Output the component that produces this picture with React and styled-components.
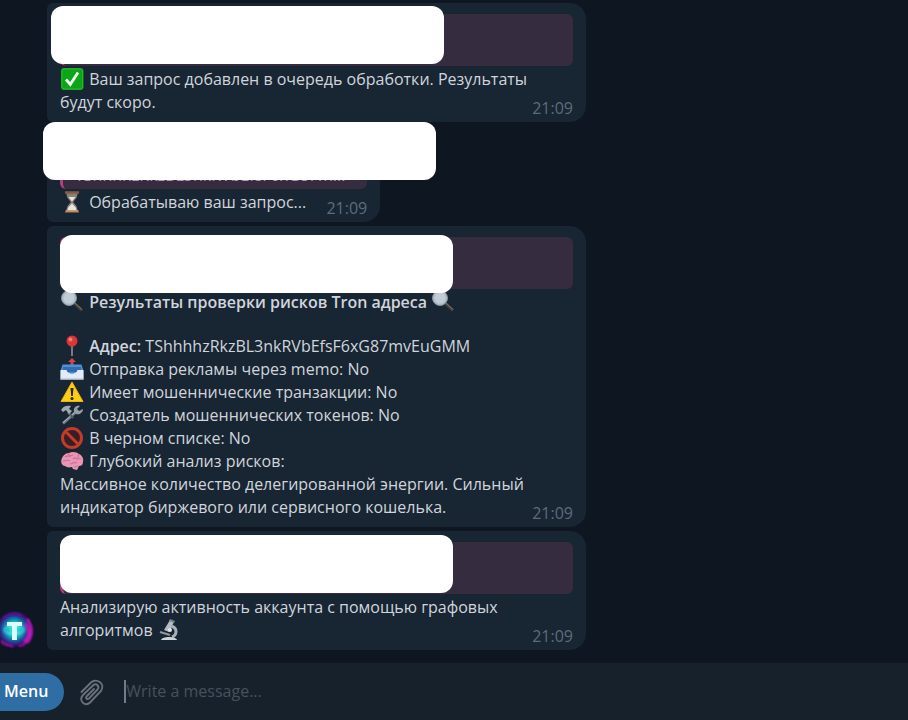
import React from "react"
import styled, { createGlobalStyle } from "styled-components"

const GlobalStyle = createGlobalStyle`
  * {
    box-sizing: border-box;
  }
  body {
    margin: 0;
    background: #0e1621;
    color: #d0d5db;
    font-family: "Open Sans", "Noto Sans", sans-serif;
    font-size: 16px;
    line-height: 23px;
    overflow-x: hidden;
  }
`

const Page = styled.div`
  min-height: 100vh;
  display: flex;
  flex-direction: column;
`

const Chat = styled.main`
  flex: 1;
  display: flex;
  align-items: flex-end;
  padding: 3px 16px 13px 0;
`

const AvatarSlot = styled.div`
  flex: none;
  width: 47px;
  display: flex;
`

const Messages = styled.div`
  flex: 1;
  display: flex;
  flex-direction: column;
  align-items: flex-start;
  gap: 4px;
`

const Bubble = styled.article`
  width: ${props => (props.$compact ? "auto" : "100%")};
  max-width: 539px;
  padding: 11px 13px 2px;
  background: #182533;
  border-radius: 6px 16px 16px 6px;
`

const Preview = styled.div`
  position: relative;
  height: 52px;
  margin-bottom: 2px;
  border-left: 3px solid #b83d7f;
  border-radius: 6px;
  background: #362c3f;
  color: #b993b4;
`

const PreviewText = styled.div`
  position: absolute;
  left: 12px;
  right: 8px;
  bottom: 2px;
  overflow: hidden;
  white-space: nowrap;
  text-overflow: ellipsis;
`

const Cover = styled.div`
  position: absolute;
  z-index: 1;
  left: ${props => props.$left}px;
  top: ${props => props.$top}px;
  width: 393px;
  height: 58px;
  border-radius: 12px;
  background: #fff;
`

const Text = styled.p`
  margin: 0;
  padding-right: ${props => (props.$inlineTime ? 61 : 0)}px;
`

const Title = styled.h2`
  margin: 0 0 21px;
  font-size: 16px;
  font-weight: 600;
`

const Facts = styled.ul`
  list-style: none;
  margin: 0;
  padding: 0;
`

const Label = styled.strong`
  font-weight: 600;
`

const Time = styled.time`
  display: block;
  margin-top: -17px;
  text-align: right;
  color: #5d6c7c;
`

const Emoji = styled.svg`
  width: 24px;
  height: 22px;
  margin-right: 1px;
  vertical-align: -5px;
`

const Avatar = styled.svg`
  width: 40px;
  height: 40px;
  margin-left: -5px;
`

const Composer = styled.form`
  display: flex;
  align-items: center;
  height: 57px;
  background: #17212b;
`

const MenuButton = styled.button`
  height: 38px;
  padding: 0 16px 0 4px;
  border: 0;
  border-radius: 0 19px 19px 0;
  background: #2f6ea5;
  color: #fff;
  font: inherit;
  font-weight: 600;
`

const AttachButton = styled.button`
  display: flex;
  margin: 0 18px 0 14px;
  padding: 0;
  border: 0;
  background: none;
  color: #69727c;
`

const Caret = styled.span`
  width: 2px;
  height: 23px;
  background: #727c87;
`

const MessageInput = styled.input`
  flex: 1;
  min-width: 0;
  padding: 0;
  border: 0;
  outline: 0;
  background: none;
  color: #d3d8de;
  font: inherit;
  &::placeholder {
    color: #46515d;
    opacity: 1;
  }
`

const Icon = ({ children }) => (
  <Emoji viewBox="0 0 24 22" aria-hidden="true">{children}</Emoji>
)

const Check = () => (
  <Icon>
    <rect x="1" y="0" width="22.500" height="22" rx="3" fill="#0ca518" />
    <rect x="2" y="1" width="20.500" height="20" rx="2" fill="none" stroke="#2cb636" />
    <path d="M6 11.500l4.300 5L18 4.500" fill="none" stroke="#f4fff4" strokeWidth="2.800" />
  </Icon>
)

const Hourglass = () => (
  <Icon>
    <path d="M6.500 2h11c0 5-2.500 6.500-4.300 9 1.800 2.500 4.300 4 4.300 9h-11c0-5 2.500-6.500 4.300-9-1.800-2.500-4.300-4-4.300-9z" fill="#83827d" />
    <path d="M8.500 6h7l-3.500 4.500zM12 12c1 3 4.500 3 4.500 8h-9c0-5 3.500-5 4.500-8z" fill="#eee4d2" />
    <path d="M5 1.500h14M5 20.500h14" stroke="#8a5b40" strokeWidth="2.400" />
    <path d="M6 20h12" stroke="#e1c4a6" />
  </Icon>
)

const Magnifier = () => (
  <Icon>
    <path d="M14 12l8 7.500" stroke="#44413f" strokeWidth="3" />
    <path d="M15 12l7 6.500" stroke="#837764" />
    <circle cx="9" cy="7" r="7.500" fill="#aebbc8" stroke="#8693a0" />
    <circle cx="9" cy="7" r="5.500" fill="#c1ccd6" />
  </Icon>
)

const Pin = () => (
  <Icon>
    <path d="M12 10v11" stroke="#8c9198" strokeWidth="1.600" />
    <circle cx="12" cy="6" r="5.500" fill="#dc3534" />
    <circle cx="10.500" cy="4.500" r="2" fill="#f27b73" />
  </Icon>
)

const Inbox = () => (
  <Icon>
    <path d="M12 0l4 4h-2.500v4h-3V4H8z" fill="#d74448" />
    <path d="M2.500 6.500h19L23.500 13v8.500H.500V13z" fill="#4c91d8" />
    <path d="M3 9h18v5H3z" fill="#2f6cb0" />
    <path d="M.500 12h6c1 5 10 5 11 0h6v9.500H.500z" fill="#e5ebf2" />
    <path d="M.500 21h23" stroke="#aab8c8" />
  </Icon>
)

const Warning = () => (
  <Icon>
    <path d="M12 1L23 20.500H1z" fill="#fdce13" stroke="#edb116" strokeLinejoin="round" />
    <path d="M10.500 7h3l-.700 8h-1.600z" fill="#2a2419" />
    <circle cx="12" cy="17.500" r="1.500" fill="#2a2419" />
  </Icon>
)

const Tools = () => (
  <Icon>
    <path d="M3 19.500L17 7" stroke="#717b84" strokeWidth="3" />
    <path d="M3 18.500L16.500 7" stroke="#b2bac1" />
    <path d="M8 8l5 6" stroke="#56616b" strokeWidth="2.600" />
    <path d="M1 6c2-4 6-5 10-4L9 5l3 2-3 3-3-4-3 2z" fill="#a1aab2" />
    <path d="M14 8c-1-4 2-7 6-6l-3 3 2 2 4-2c0 4-4 6-7 5z" fill="#939ea7" />
  </Icon>
)

const Forbidden = () => (
  <Icon>
    <circle cx="12" cy="11" r="9.500" fill="#391f25" stroke="#c43b27" strokeWidth="3" />
    <path d="M6 5l12 12" stroke="#c43b27" strokeWidth="3" />
  </Icon>
)

const Brain = () => (
  <Icon>
    <path d="M2 8c1-3 4-5 7-5 3-2 8-1 10 1 3 1 5 5 4 8 0 3-2 4-4 4l-2 4-4-1-1-2c-3 1-6 0-7-1-3 0-5-4-3-8z" fill="#e995b4" />
    <path d="M5 7c2-2 4 0 6-1M8 3c0 3 3 3 5 2M13 9c2-2 4-1 5 1M3 11c3 0 4-2 7 0M10 14c3 0 4-3 7-1M19 5c-2 1-1 4 2 4M14 17l4-1" fill="none" stroke="#cb6f98" strokeWidth="1.100" />
  </Icon>
)

const Microscope = () => (
  <Icon>
    <path d="M13 1l4 2-5 10-5-2z" fill="#b4bdc4" />
    <path d="M13 0l5 2-1 2-5-2z" fill="#7a858f" />
    <path d="M14 7c7 2 6 9 1 11" fill="none" stroke="#a5b0b8" strokeWidth="3" />
    <path d="M3 13l10 3" stroke="#8d99a3" strokeWidth="2" />
    <path d="M4 21c1-4 15-4 16 0z" fill="#ced4d8" />
    <circle cx="13" cy="11" r="2" fill="#e0e5e8" />
  </Icon>
)

const BotAvatar = () => (
  <Avatar viewBox="0 0 40 40" role="img" aria-label="Tron bot">
    <defs>
      <radialGradient id="glow" cx="48%" cy="48%">
        <stop offset="0" stopColor="#48f5ec" />
        <stop offset=".4" stopColor="#14b4c8" />
        <stop offset=".68" stopColor="#1f4594" />
        <stop offset=".84" stopColor="#3a1266" />
        <stop offset="1" stopColor="#160a2c" />
      </radialGradient>
      <filter id="soft">
        <feGaussianBlur stdDeviation=".8" />
      </filter>
    </defs>
    <circle cx="20" cy="20" r="19" fill="url(#glow)" />
    <g fill="none" filter="url(#soft)">
      <path d="M32 9c6 8 6 17 0 24M30 14c6 6 4 13-1 18" stroke="#c21fc0" strokeWidth="2.500" />
      <path d="M6 31c5 6 9 3 12 6M24 36c4 0 6-2 8-5" stroke="#a01bb0" strokeWidth="2" />
      <path d="M8 8c6-5 14-6 20-2" stroke="#5a1a9a" strokeWidth="1.500" />
      <ellipse cx="19" cy="20" rx="10" ry="4" stroke="#74f9f3" />
    </g>
    <path d="M12 12h15v4h-5v14h-5V16h-5z" fill="#d8fffb" />
  </Avatar>
)

const Paperclip = () => (
  <svg width="28" height="30" viewBox="0 0 28 30" fill="none" stroke="currentColor" strokeWidth="1.900" strokeLinecap="round" aria-hidden="true">
    <path d="M3.500 15L13 5.500c5-5 15 1 10 8.500L12 25.500c-5 5-12-2-7-7.500L15 8.500c3.500-3 7 1 4.500 4L11 21.500c-2 1.500-4-.500-2-2.500l7-7" />
  </svg>
)

const facts = [
  { icon: <Inbox />, text: "Отправка рекламы через memo: No" },
  { icon: <Warning />, text: "Имеет мошеннические транзакции: No" },
  { icon: <Tools />, text: "Создатель мошеннических токенов: No" },
  { icon: <Forbidden />, text: "В черном списке: No" },
  { icon: <Brain />, text: "Глубокий анализ рисков:" },
]

const Message = ({ left, top, quote, compact, children }) => (
  <Bubble $compact={compact}>
    <Preview>
      {quote && <PreviewText>{quote}</PreviewText>}
      <Cover $left={left} $top={top} />
    </Preview>
    {children}
    <Time>21:09</Time>
  </Bubble>
)

export default () => {
  return (
    <Page>
      <GlobalStyle />
      <Chat>
        <AvatarSlot>
          <BotAvatar />
        </AvatarSlot>
        <Messages>
          <Message left={-12} top={-8}>
            <Text><Check /> Ваш запрос добавлен в очередь обработки. Результаты будут скоро.</Text>
          </Message>
          <Message left={-20} top={-15} compact quote="TShhhhzRkzBL3nkRVbEfsF6xG87m...">
            <Text $inlineTime><Hourglass /> Обрабатываю ваш запрос...</Text>
          </Message>
          <Message left={-3} top={-2}>
            <Title><Magnifier /> Результаты проверки рисков Tron адреса <Magnifier /></Title>
            <Facts>
              <li><Pin /> <Label>Адрес:</Label> TShhhhzRkzBL3nkRVbEfsF6xG87mvEuGMM</li>
              {facts.map(fact => (
                <li key={fact.text}>{fact.icon} {fact.text}</li>
              ))}
            </Facts>
            <Text>Массивное количество делегированной энергии. Сильный индикатор биржевого или сервисного кошелька.</Text>
          </Message>
          <Message left={-3} top={-7}>
            <Text>Анализирую активность аккаунта с помощью графовых алгоритмов <Microscope /></Text>
          </Message>
        </Messages>
      </Chat>
      <Composer onSubmit={e => e.preventDefault()}>
        <MenuButton type="button">Menu</MenuButton>
        <AttachButton type="button" aria-label="Attach file">
          <Paperclip />
        </AttachButton>
        <Caret />
        <MessageInput type="text" aria-label="Message" placeholder="Write a message..." />
      </Composer>
    </Page>
  )
}
